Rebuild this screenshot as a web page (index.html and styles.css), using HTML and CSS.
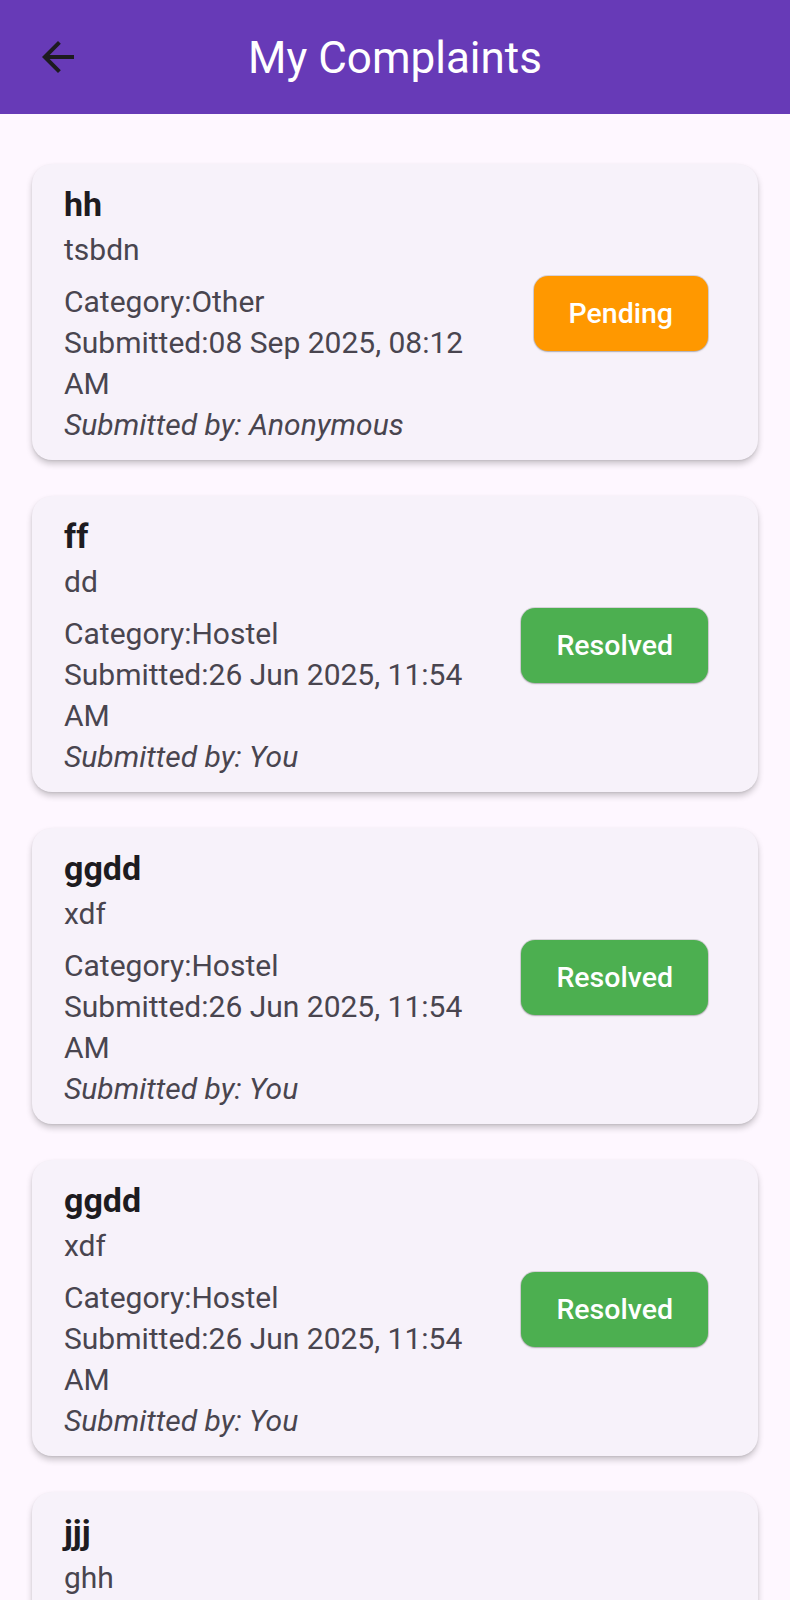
FILE: index.html
```html
<!DOCTYPE html>
<html lang="en">
<head>
<meta charset="utf-8">
<title>My Complaints</title>
<link rel="stylesheet" href="styles.css">
</head>
<body>
<header class="appbar">
  <button class="back" aria-label="Back">
    <svg viewBox="0 0 24 24" width="48" height="48"><path d="M20 11H7.83l5.59-5.59L12 4l-8 8 8 8 1.41-1.41L7.83 13H20v-2z" fill="#1D1B20"/></svg>
  </button>
  <h1 class="title">My Complaints</h1>
  <span class="spacer"></span>
</header>
<main class="list">
  <article class="card">
    <div class="info">
      <h2 class="name">hh</h2>
      <p class="desc">tsbdn</p>
      <div class="meta">
        <p class="line">Category:Other</p>
        <p class="line">Submitted:08 Sep 2025, 08:12 AM</p>
        <p class="line by">Submitted by: Anonymous</p>
      </div>
    </div>
    <span class="status pending">Pending</span>
  </article>
  <article class="card">
    <div class="info">
      <h2 class="name">ff</h2>
      <p class="desc">dd</p>
      <div class="meta">
        <p class="line">Category:Hostel</p>
        <p class="line">Submitted:26 Jun 2025, 11:54 AM</p>
        <p class="line by">Submitted by: You</p>
      </div>
    </div>
    <span class="status resolved">Resolved</span>
  </article>
  <article class="card">
    <div class="info">
      <h2 class="name">ggdd</h2>
      <p class="desc">xdf</p>
      <div class="meta">
        <p class="line">Category:Hostel</p>
        <p class="line">Submitted:26 Jun 2025, 11:54 AM</p>
        <p class="line by">Submitted by: You</p>
      </div>
    </div>
    <span class="status resolved">Resolved</span>
  </article>
  <article class="card">
    <div class="info">
      <h2 class="name">ggdd</h2>
      <p class="desc">xdf</p>
      <div class="meta">
        <p class="line">Category:Hostel</p>
        <p class="line">Submitted:26 Jun 2025, 11:54 AM</p>
        <p class="line by">Submitted by: You</p>
      </div>
    </div>
    <span class="status resolved">Resolved</span>
  </article>
  <article class="card">
    <div class="info">
      <h2 class="name">jjj</h2>
      <p class="desc">ghh</p>
      <div class="meta">
        <p class="line">Category:Hostel</p>
        <p class="line">Submitted:26 Jun 2025, 11:54 AM</p>
        <p class="line by">Submitted by: You</p>
      </div>
    </div>
    <span class="status pending">Pending</span>
  </article>
</main>
</body>
</html>
```

FILE: styles.css
```css
html, body {
  margin: 0;
  padding: 0;
}

body {
  background: #FEF7FF;
  font-family: Roboto, "Liberation Sans", Arial, sans-serif;
  color: #49454F;
}

.appbar {
  height: 114px;
  background: #673AB7;
  display: grid;
  grid-template-columns: 1fr auto 1fr;
  align-items: center;
}

.back {
  justify-self: start;
  margin-left: 34px;
  padding: 0;
  border: 0;
  background: none;
  width: 48px;
  height: 48px;
  display: flex;
}

.title {
  margin: 4px 0 0 0;
  font-size: 44px;
  font-weight: 400;
  color: #FFFFFF;
  line-height: 1.172;
  white-space: nowrap;
}

.list {
  padding: 50px 32px 0 32px;
  display: flex;
  flex-direction: column;
  gap: 36px;
}

.card {
  display: flex;
  align-items: center;
  gap: 24px;
  padding: 18px 50px 15px 32px;
  background: #F7F2FA;
  border-radius: 20px;
  box-shadow: 0 4px 6px rgba(0, 0, 0, 0.2), 0 1px 2px rgba(0, 0, 0, 0.08);
}

.info {
  flex: 1;
  min-width: 0;
}

.name {
  margin: 0;
  font-size: 34px;
  font-weight: 700;
  line-height: 44px;
  color: #1D1B20;
}

.desc {
  margin: 3px 0 0 0;
  font-size: 30px;
  line-height: 41px;
}

.meta {
  margin-top: 11px;
}

.line {
  margin: 0;
  font-size: 30px;
  line-height: 41px;
}

.by {
  font-style: italic;
}

.status {
  flex: none;
  height: 75px;
  padding: 0 35px;
  box-sizing: border-box;
  display: flex;
  align-items: center;
  justify-content: center;
  border-radius: 14px;
  color: #FFFFFF;
  font-size: 28.5px;
  font-weight: 500;
  box-shadow: 0 0 0 1px rgba(0, 0, 0, 0.12), 0 1px 2px rgba(0, 0, 0, 0.2);
}

.pending {
  background: #FF9800;
}

.resolved {
  background: #4CAF50;
}
```
